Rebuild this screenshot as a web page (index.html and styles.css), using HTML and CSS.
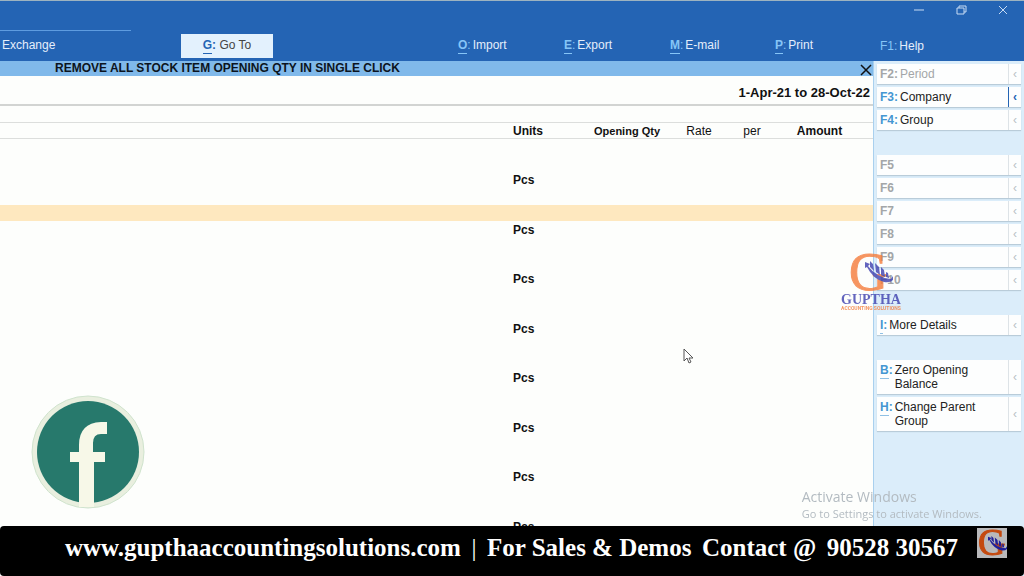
FILE: index.html
```html
<!DOCTYPE html>
<html lang="en">
<head>
<meta charset="utf-8">
<title>Stock Items</title>
<link rel="stylesheet" href="styles.css">
</head>
<body>
<svg class="defs" width="0" height="0" aria-hidden="true">
  <symbol id="leaf" viewBox="0 0 28 22">
    <path d="M0 1 5 3 3 5Q12 17 26 18L28 15V19Q25 22 19 21 8 18 2 6L0 7Z"/>
    <path d="M5 0 8 3 9 10 5 6ZM10 2 14 6 15 14 11 11ZM16 6 19 9 20 16 16 14ZM21 11 23 12 24 17 21 16Z"/>
  </symbol>
</svg>
<div class="app">
  <header class="top">
    <div class="window-controls">
      <button aria-label="Minimize"><svg width="12" height="12"><path d="M1 6H11"/></svg></button>
      <button aria-label="Restore"><svg width="12" height="12"><path d="M2 4H9V10H2ZM4 4V2H11V8H9"/></svg></button>
      <button aria-label="Close"><svg width="12" height="12"><path d="M2 2 10 10M10 2 2 10"/></svg></button>
    </div>
    <nav class="menu">
      <button class="exchange">Exchange</button>
      <button class="goto"><b class="key">G</b><b>:</b> Go To</button>
      <button class="import"><b class="key">O</b><i>:</i>Import</button>
      <button><b class="key">E</b><i>:</i>Export</button>
      <button><b class="key">M</b><i>:</i>E-mail</button>
      <button><b class="key">P</b><i>:</i>Print</button>
      <button><i>F1:</i>Help</button>
    </nav>
  </header>
  <div class="content">
    <main class="report">
      <div class="title">
        <h1>REMOVE ALL STOCK ITEM OPENING QTY IN SINGLE CLICK</h1>
        <button class="close" aria-label="Close report"><svg width="12" height="14"><path d="M1 3 11 13M11 3 1 13"/></svg></button>
      </div>
      <div class="period">1-Apr-21 to 28-Oct-22</div>
      <table class="items">
        <colgroup><col><col class="c-units"><col class="c-qty"><col class="c-rate"><col class="c-per"><col class="c-amount"></colgroup>
        <thead><tr><td></td><th class="units">Units</th><th class="qty">Opening Qty</th><th class="plain">Rate</th><th class="plain">per</th><th>Amount</th></tr></thead>
        <tbody>
          <tr><td colspan="6"></td></tr><tr><td colspan="6"></td></tr>
          <tr><td></td><td class="units">Pcs</td><td colspan="4"></td></tr>
          <tr><td colspan="6"></td></tr><tr class="selected"><td colspan="6"></td></tr>
          <tr><td></td><td class="units">Pcs</td><td colspan="4"></td></tr>
          <tr><td colspan="6"></td></tr><tr><td colspan="6"></td></tr>
          <tr><td></td><td class="units">Pcs</td><td colspan="4"></td></tr>
          <tr><td colspan="6"></td></tr><tr><td colspan="6"></td></tr>
          <tr><td></td><td class="units">Pcs</td><td colspan="4"></td></tr>
          <tr><td colspan="6"></td></tr><tr><td colspan="6"></td></tr>
          <tr><td></td><td class="units">Pcs</td><td colspan="4"></td></tr>
          <tr><td colspan="6"></td></tr><tr><td colspan="6"></td></tr>
          <tr><td></td><td class="units">Pcs</td><td colspan="4"></td></tr>
          <tr><td colspan="6"></td></tr><tr><td colspan="6"></td></tr>
          <tr><td></td><td class="units">Pcs</td><td colspan="4"></td></tr>
          <tr><td colspan="6"></td></tr><tr><td colspan="6"></td></tr>
          <tr><td></td><td class="units">Pcs</td><td colspan="4"></td></tr>
        </tbody>
      </table>
    </main>
    <aside class="side">
      <div class="group">
        <button class="off"><b>F2:</b><span>Period</span><em>‹</em></button>
        <button class="open"><b>F3:</b><span>Company</span><em>‹</em></button>
        <button><b>F4:</b><span>Group</span><em>‹</em></button>
      </div>
      <div class="group">
        <button class="off"><b>F5</b><span></span><em>‹</em></button>
        <button class="off"><b>F6</b><span></span><em>‹</em></button>
        <button class="off"><b>F7</b><span></span><em>‹</em></button>
        <button class="off"><b>F8</b><span></span><em>‹</em></button>
        <button class="off"><b>F9</b><span></span><em>‹</em></button>
        <button class="off"><b>F10</b><span></span><em>‹</em></button>
      </div>
      <div class="group">
        <button><b><u class="key">I</u>:</b><span>More Details</span><em>‹</em></button>
      </div>
      <div class="group">
        <button><b><u class="key">B</u>:</b><span>Zero Opening Balance</span><em>‹</em></button>
        <button><b><u class="key">H</u>:</b><span>Change Parent Group</span><em>‹</em></button>
      </div>
    </aside>
  </div>
</div>

<svg class="facebook" width="114" height="114" viewBox="0 0 114 114" role="img" aria-label="Facebook">
  <circle cx="57" cy="57" r="56" fill="#e9efdf" stroke="#cfe3cd"/>
  <circle cx="57" cy="57" r="51" fill="#27796c"/>
  <path d="M48 112V67H39V57H48V50Q48 28 70 27H76V39H70Q62 39 62 48V57H74V67H63V112Z" fill="#f7f8e8"/>
</svg>

<svg class="watermark" width="60" height="62" viewBox="0 0 60 62">
  <text class="mark" x="8" y="40">G</text>
  <use href="#leaf" x="24" y="11" width="28" height="22"/>
  <text class="brand" x="30" y="54">GUPTHA</text>
  <text class="tag" x="30" y="60">ACCOUNTING SOLUTIONS</text>
</svg>

<svg class="cursor" width="11" height="16" viewBox="0 0 11 16" aria-hidden="true">
  <path d="M1 1V13L4 10 6 15 8 14 6 10H10Z" fill="#fff" stroke="#555"/>
</svg>

<div class="activate"><strong>Activate Windows</strong><span>Go to Settings to activate Windows.</span></div>

<footer class="banner">
  <p><span>www.gupthaaccountingsolutions.com</span> <span class="bar">|</span> <span>For Sales &amp; Demos</span> <span>Contact @</span> <span>90528 30567</span></p>
  <svg class="logo" width="30" height="30" viewBox="0 0 30 30">
    <text x="1" y="27">G</text>
    <use href="#leaf" x="11" y="8" width="19" height="15"/>
  </svg>
</footer>
</body>
</html>
```

FILE: styles.css
```css
* { box-sizing: border-box; }
body {
  margin: 0;
  height: 100vh;
  overflow: hidden;
  font: 12px/14px "Liberation Sans", Arial, sans-serif;
  color: #222;
  background: #fdfefc;
}
button { font: inherit; color: inherit; background: none; border: 0; padding: 0; }
i { font-style: normal; }
svg { display: block; }
.defs { position: absolute; }
.app { display: flex; flex-direction: column; height: 100%; }

.top { background: #2464b4; border-top: 1px solid #9db3c0; color: #e4eefb; padding-bottom: 3px; }
.window-controls { display: flex; justify-content: flex-end; gap: 30px; padding: 3px 15px 0 0; height: 29px; }
.window-controls button { height: 12px; }
.window-controls path { fill: none; stroke: #c8dcf4; }
.menu { display: grid; grid-template-columns: 181px 92px 1fr 106px 106px 105px 105px 144px; height: 28px; }
.menu button { text-align: left; height: 24px; align-self: end; }
.menu .key { display: inline-block; line-height: 15px; border-bottom: 1px solid; }
.menu i, .menu .key { color: #86c5f7; }
.menu i { margin-right: 2px; }
.menu .exchange { padding: 0 0 0 2px; height: 28px; width: 131px; border-top: 1px solid #5e9ce0; }
.menu .goto { background: #e3f1fd; color: #444; text-align: center; }
.menu .goto b { color: #2464b4; }
.menu .import { grid-column: 4; }

.content { flex: 1; min-height: 0; display: grid; grid-template-columns: 1fr 151px; }
.report { overflow: hidden; min-height: 0; }
.title { display: flex; justify-content: space-between; background: #80b9ea; height: 15px; padding: 0 1px 0 55px; }
.title h1 { margin: 0; font-size: 12px; line-height: 14px; color: #0c1420; }
.close path { stroke: #111; stroke-width: 1.5; }
.period { height: 30px; padding: 9px 3px 0; text-align: right; font-size: 13px; line-height: 15px; font-weight: bold; color: #111; border-bottom: 2px solid #d2d4d2; }
.items { width: 100%; table-layout: fixed; border-collapse: separate; border-spacing: 0; margin-top: 16px; }
.items td, .items th { padding: 0; height: 17px; line-height: 14px; }
.items thead td, .items thead th { border-top: 1px solid #dcdedc; border-bottom: 1px solid #dcdedc; color: #111; }
.items tr:nth-child(odd) td { height: 16px; }
.items .units { text-align: left; padding-left: 1px; font-weight: bold; color: #111; }
.items .qty { font-size: 11px; text-align: right; white-space: nowrap; }
.items .plain { font-weight: normal; }
.items .selected { background: #fee8bf; }
.c-units { width: 80px; }
.c-qty { width: 68px; }
.c-rate { width: 78px; }
.c-per { width: 28px; }
.c-amount { width: 107px; }

.side { background: #dbedfa; border-left: 1px solid #a9d0ee; padding: 3px 3px 0; display: flex; flex-direction: column; gap: 25px; }
.group { display: grid; gap: 3px; }
.group button { display: grid; grid-template-columns: auto 1fr 13px; min-height: 20px; background: #fdfefe; text-align: left; box-shadow: 0 1px 1px #b9ccd9; padding-left: 3px; }
.group b { color: #4496d2; padding: 3px 2px 0 0; }
.group span { padding: 3px 24px 3px 0; }
.group em { font-style: normal; color: #b8bfc4; border-left: 1px solid #dde3e7; display: grid; place-items: center; }
.group .key { display: inline-block; text-decoration: none; border-bottom: 1px solid #8fc0e4; line-height: 15px; height: 16px; margin-top: -1px; }
.group .off, .group .off b { color: #a3a6a8; }
.group .open em { color: #2464b4; border-left-color: #2464b4; font-weight: bold; }

.facebook { position: fixed; left: 31px; bottom: 67px; }
.watermark { position: fixed; right: 123px; top: 250px; opacity: .8; fill: #3d3fae; overflow: visible; }
.mark { font: 54px "Liberation Serif", serif; fill: #f47b3a; stroke: #f47b3a; stroke-width: 1px; }
.brand { font: bold 14px "Liberation Serif", serif; text-anchor: middle; }
.tag { font: bold 5px Roboto, sans-serif; fill: #f47b3a; text-anchor: middle; }
.cursor { position: fixed; left: 683px; top: 348px; }
.activate { position: fixed; right: 42px; bottom: 54px; display: grid; font: 11px/16px "Open Sans", sans-serif; color: #b3bbc1; }
.activate strong { font-weight: normal; font-size: 14px; line-height: 18px; }
.banner { position: fixed; inset: auto 0 0; height: 50px; background: #000; border-radius: 4px; color: #fff; display: flex; gap: 19px; padding: 2px 17px 0 65px; }
.banner p { flex: 1; display: flex; justify-content: space-between; margin: 6px 0 0; font: bold 25px/28px "Liberation Serif", serif; white-space: nowrap; }
.banner .bar { font-weight: normal; }
.logo { background: #b9b9bb; fill: #20209a; overflow: visible; }
.logo text { font: 38px "Liberation Serif", serif; fill: #c44a10; stroke: #c44a10; stroke-width: 1px; }
```
